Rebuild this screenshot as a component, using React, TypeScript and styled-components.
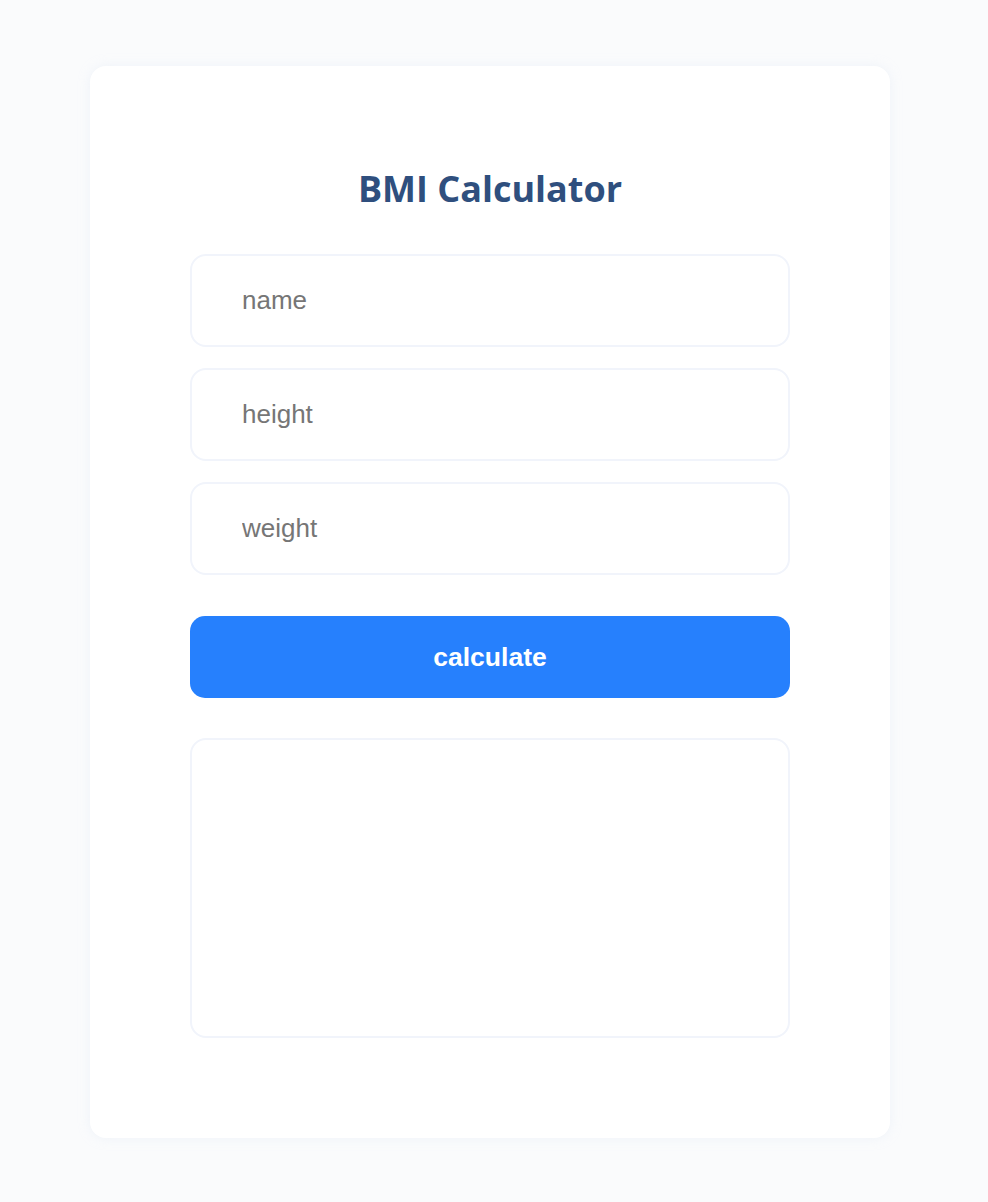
import React from "react";
import styled, { createGlobalStyle } from "styled-components";

const GlobalStyle = createGlobalStyle`
  html, body {
    margin: 0;
    padding: 0;
    background: #fafbfc;
  }
  * { box-sizing: border-box; }
`;

const Page = styled.div`
  display: flex;
  justify-content: flex-start;
  padding: 66px 0 64px 90px;
`;

const Card = styled.div`
  width: 800px;
  background: #ffffff;
  border-radius: 16px;
  box-shadow: 0 0 12px rgba(220, 228, 245, 0.35);
  padding: 100px 100px 100px;
  display: flex;
  flex-direction: column;
`;

const Title = styled.h1`
  margin: 0 0 43px;
  font-family: "Open Sans", sans-serif;
  font-weight: 700;
  font-size: 36px;
  line-height: 45px;
  color: #2f4f7e;
  text-align: center;
`;

const Fields = styled.div`
  display: flex;
  flex-direction: column;
  gap: 21px;
`;

const Field = styled.input`
  width: 100%;
  height: 93px;
  border: 2px solid #f1f4fb;
  border-radius: 16px;
  padding: 0 50px;
  font-family: "Liberation Sans", Arial, sans-serif;
  font-size: 26px;
  color: #333;
  background: #fff;
  outline: none;
  &::placeholder {
    color: #767676;
  }
`;

const Button = styled.button`
  margin-top: 41px;
  width: 100%;
  height: 82px;
  border: none;
  border-radius: 15px;
  background: #2680fd;
  color: #ffffff;
  font-family: "Liberation Sans", Arial, sans-serif;
  font-weight: 700;
  font-size: 26.5px;
  cursor: pointer;
`;

const Result = styled.div`
  margin-top: 40px;
  width: 100%;
  height: 300px;
  border: 2px solid #f1f4fb;
  border-radius: 16px;
`;

export default function App() {
  return (
    <>
      <GlobalStyle />
      <Page>
        <Card>
          <Title>BMI Calculator</Title>
          <Fields>
            <Field type="text" placeholder="name" />
            <Field type="text" placeholder="height" />
            <Field type="text" placeholder="weight" />
          </Fields>
          <Button type="button">calculate</Button>
          <Result />
        </Card>
      </Page>
    </>
  );
}
